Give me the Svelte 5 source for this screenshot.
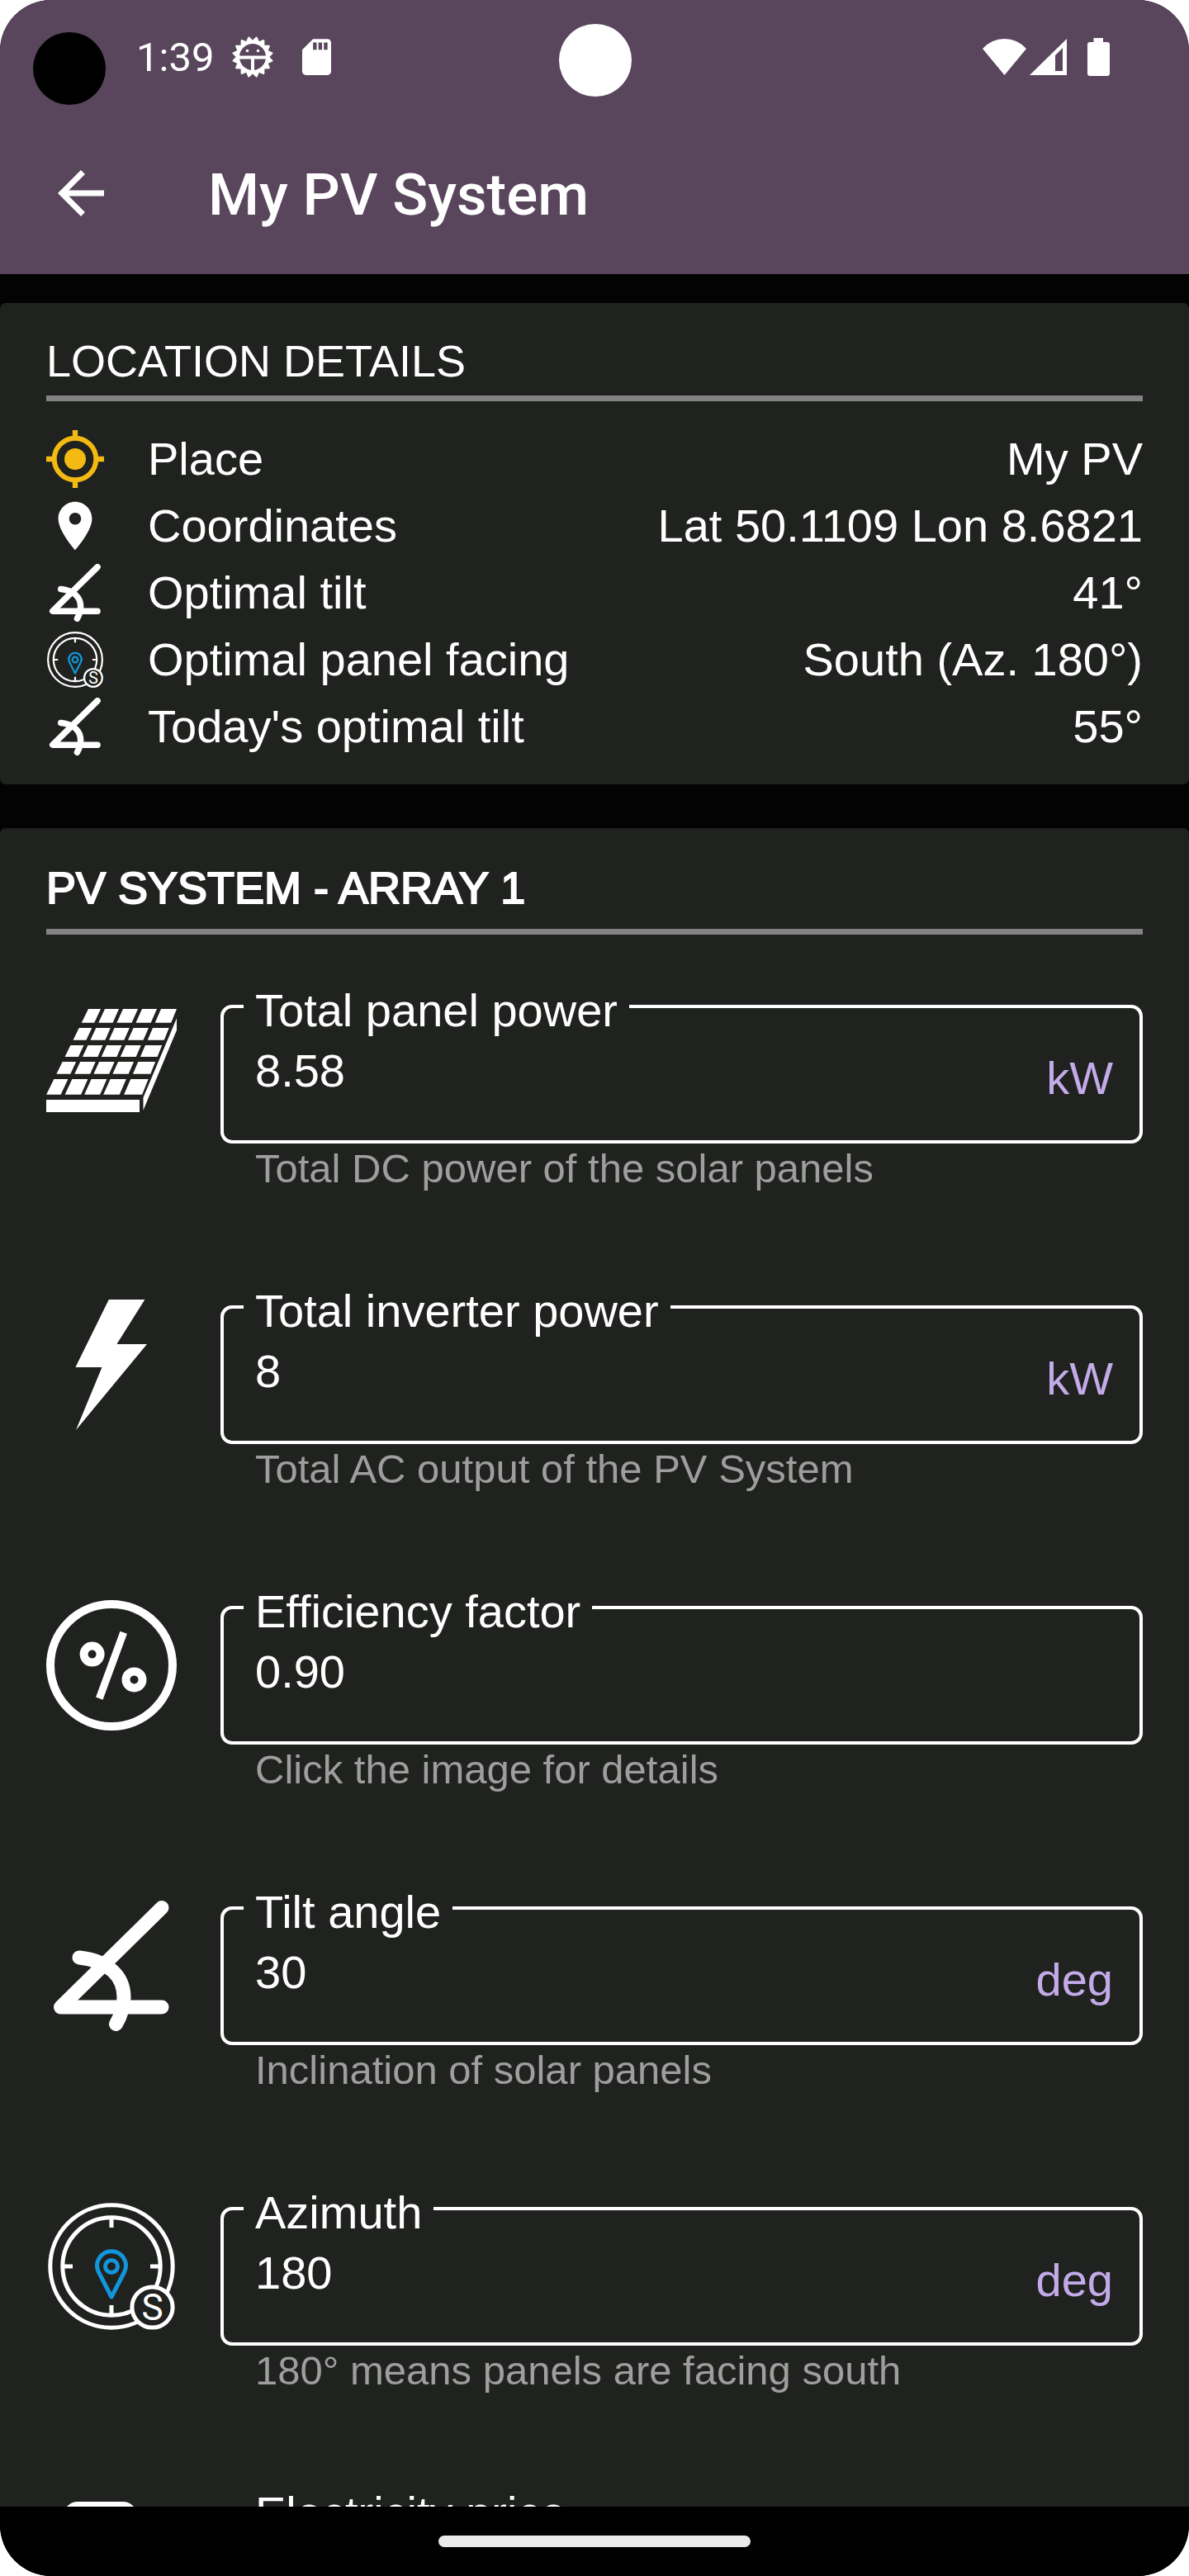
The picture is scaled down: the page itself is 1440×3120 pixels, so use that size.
<script>
	const details = [
		{ icon: 'target', label: 'Place', value: 'My PV' },
		{ icon: 'place', label: 'Coordinates', value: 'Lat 50.1109 Lon 8.6821' },
		{ icon: 'tilt', label: 'Optimal tilt', value: '41°' },
		{ icon: 'compass', label: 'Optimal panel facing', value: 'South (Az. 180°)' },
		{ icon: 'tilt', label: "Today's optimal tilt", value: '55°' }
	]

	let fields = $state([
		{ id: 'panel', icon: 'panel', label: 'Total panel power', value: '8.58', unit: 'kW', hint: 'Total DC power of the solar panels' },
		{ id: 'inverter', icon: 'bolt', label: 'Total inverter power', value: '8', unit: 'kW', hint: 'Total AC output of the PV System' },
		{ id: 'efficiency', icon: 'percent', label: 'Efficiency factor', value: '0.90', unit: '', hint: 'Click the image for details' },
		{ id: 'tilt', icon: 'tilt', label: 'Tilt angle', value: '30', unit: 'deg', hint: 'Inclination of solar panels' },
		{ id: 'azimuth', icon: 'compass', label: 'Azimuth', value: '180', unit: 'deg', hint: '180° means panels are facing south' },
		{ id: 'price', icon: 'meter', label: 'Electricity price', value: '', unit: '', hint: '' }
	])

	// solar panel cells: column edges at the top and bottom of the sheet
	const colsTop = [[51, 66], [71, 88], [93, 111], [116, 134], [139, 158]]
	const colsBottom = [[0, 17.5], [22.5, 42], [46, 65], [69, 88.6], [94, 116]]
	const rows = [[12, 28.7], [35, 49.7], [56, 70], [76, 90.7], [97, 115.7]]

	const edge = (a, b, y) => a + ((b - a) * (y - 12)) / 104

	const cells = rows.flatMap(([y1, y2]) =>
		colsTop.map(([l, r], i) => {
			const [bl, br] = colsBottom[i]
			return `${edge(l, bl, y1)},${y1} ${edge(r, br, y1)},${y1} ${edge(r, br, y2)},${y2} ${edge(l, bl, y2)},${y2}`
		})
	)

	const gear = Array.from({ length: 32 }, (_, i) => {
		const r = i % 2 ? 19 : 24
		const a = ((i + 1) * Math.PI) / 16
		return `${25 + r * Math.sin(a)},${25 - r * Math.cos(a)}`
	}).join(' ')
</script>

{#snippet icon(name)}
	{#if name === 'target'}
		<svg class="icon gold" viewBox="0 0 70 70" aria-hidden="true">
			<circle cx="35" cy="35" r="25.3" fill="none" stroke="currentColor" stroke-width="6" />
			<circle cx="35" cy="35" r="13" fill="currentColor" />
			<path d="M35 0v9M35 61v9M0 35h9M61 35h9" stroke="currentColor" stroke-width="6.4" />
		</svg>
	{:else if name === 'place'}
		<svg class="icon" viewBox="0 0 24 24" aria-hidden="true">
			<path fill="currentColor" d="M12 2C8.13 2 5 5.13 5 9c0 5.25 7 13 7 13s7-7.75 7-13c0-3.87-3.13-7-7-7zm0 9.5a2.5 2.5 0 0 1 0-5 2.5 2.5 0 0 1 0 5z" />
		</svg>
	{:else if name === 'tilt'}
		<svg class="icon" viewBox="0 0 158 158" fill="none" stroke="currentColor" stroke-width="17" stroke-linecap="round" stroke-linejoin="round" aria-hidden="true">
			<path d="M140 8.5 17.5 129H140" />
			<path d="M40 69C76 73 94 92 94 117C94 130 90 140 84.5 149.5" />
		</svg>
	{:else if name === 'compass'}
		<svg class="icon" viewBox="0 0 158 158" fill="none" stroke="currentColor" stroke-width="5" aria-hidden="true">
			<circle cx="79" cy="79" r="74.2" />
			<circle cx="79" cy="79" r="59.2" />
			<path d="M79 20v12M79 126v12M20 79h12M126 79h12" />
			<g stroke="#1296db" stroke-linejoin="round">
				<path d="M79 116 63.5 86A17.4 17.4 0 1 1 94.5 86Z" />
				<circle cx="79" cy="79" r="7.5" />
			</g>
			<circle cx="128.5" cy="128.5" r="24.6" fill="#20221f" />
			<text class="south" x="128.5" y="144" text-anchor="middle">S</text>
		</svg>
	{:else if name === 'panel'}
		<svg class="icon" viewBox="0 0 158 158" fill="currentColor" aria-hidden="true">
			{#each cells as points}
				<polygon {points} />
			{/each}
			<path d="M0 122h113v15H0zM158 23.3V37.7L117.5 134.7V119.3z" />
		</svg>
	{:else if name === 'bolt'}
		<svg class="icon" viewBox="0 0 158 158" fill="currentColor" aria-hidden="true">
			<path d="M75.8 0H119.4L85.4 54H122L36 158L67.5 82H35.4z" />
		</svg>
	{:else if name === 'percent'}
		<svg class="icon" viewBox="0 0 158 158" fill="none" stroke="currentColor" stroke-width="10" aria-hidden="true">
			<circle cx="79" cy="79" r="74" />
			<circle cx="55.6" cy="65.6" r="10" />
			<circle cx="106.5" cy="96.4" r="10" />
			<path d="M93.7 39.2 64.3 119.1" stroke-width="9" />
		</svg>
	{:else if name === 'meter'}
		<svg class="icon" viewBox="0 0 158 158" aria-hidden="true">
			<rect x="26" y="5" width="79" height="148" rx="12" fill="none" stroke="currentColor" stroke-width="10" />
		</svg>
	{/if}
{/snippet}

<div class="screen">
	<header>
		<div class="status">
			<time>1:39</time>
			<svg width="50" height="50" viewBox="0 0 50 50" aria-hidden="true">
				<polygon points={gear} fill="#fff" stroke="#fff" stroke-width="2" stroke-linejoin="round" />
				<circle cx="25" cy="25" r="16" fill="#59455c" />
				<path d="M9 25.5h32M25 25v17" stroke="#fff" stroke-width="4" />
				<circle cx="18.5" cy="17.5" r="1.8" fill="#fff" />
				<circle cx="31.5" cy="17.5" r="1.8" fill="#fff" />
			</svg>
			<svg class="sd" width="35" height="44" viewBox="4 2 16 20" aria-hidden="true">
				<path fill="#fff" d="M18 2h-8L4 8v12c0 1.1.9 2 2 2h12c1.1 0 2-.9 2-2V4c0-1.1-.9-2-2-2zm-6 6h-2V4h2v4zm3 0h-2V4h2v4zm3 0h-2V4h2v4z" />
			</svg>
			<div class="signals">
				<svg width="53" height="44" viewBox="0 0 53 44" aria-hidden="true">
					<path fill="#fff" d="M0 12Q11 0 26.5 0T53 12L26.5 44z" />
				</svg>
				<svg width="45" height="44" viewBox="0 0 45 44" aria-hidden="true">
					<path fill="#fff" fill-rule="evenodd" d="M45 0V44H0zM40 11l-9 9v19h9z" />
				</svg>
				<svg class="battery" width="27" height="46" viewBox="0 0 27 46" aria-hidden="true">
					<path fill="#fff" d="M7.5 0H19v5h5a3 3 0 0 1 3 3v35a3 3 0 0 1-3 3H3a3 3 0 0 1-3-3V8a3 3 0 0 1 3-3h4.5z" />
				</svg>
			</div>
			<span class="recorder"></span>
			<span class="camera"></span>
		</div>
		<div class="toolbar">
			<button class="back" aria-label="Back">
				<svg width="84" height="84" viewBox="0 0 24 24" aria-hidden="true">
					<path fill="#fff" d="M20 11H7.83l5.59-5.59L12 4l-8 8 8 8 1.41-1.41L7.83 13H20v-2z" />
				</svg>
			</button>
			<h1>My PV System</h1>
		</div>
	</header>

	<main>
		<section class="card">
			<h2>LOCATION DETAILS</h2>
			<dl>
				{#each details as d}
					<div class="detail">
						{@render icon(d.icon)}
						<dt>{d.label}</dt>
						<dd>{d.value}</dd>
					</div>
				{/each}
			</dl>
		</section>

		<section class="card">
			<h2 class="array">PV SYSTEM - ARRAY 1</h2>
			<form class="fields">
				{#each fields as f}
					<div class="field">
						<button type="button" class="picture" aria-label={f.label}>{@render icon(f.icon)}</button>
						<div class="control">
							<fieldset>
								<legend><label for={f.id}>{f.label}</label></legend>
								<div class="entry">
									<input id={f.id} type="text" inputmode="decimal" bind:value={f.value} />
									{#if f.unit}<span class="unit">{f.unit}</span>{/if}
								</div>
							</fieldset>
							<p>{f.hint}</p>
						</div>
					</div>
				{/each}
			</form>
		</section>
	</main>

	<nav><span class="handle"></span></nav>
</div>

<style>
	:global(body) {
		margin: 0;
		background: #fff;
	}

	.screen {
		display: flex;
		flex-direction: column;
		height: 100vh;
		overflow: hidden;
		border-radius: 62px;
		background: #030303;
		color: #fff;
		font-family: "Liberation Sans", Arial, sans-serif;
		font-size: 56px;
		line-height: 64px;
	}

	header {
		flex: none;
		background: #59455c;
		font-family: Roboto, sans-serif;
	}

	.status {
		position: relative;
		display: flex;
		align-items: center;
		height: 136px;
		padding: 2px 96px 0 165px;
		box-sizing: border-box;
	}

	.status time {
		margin-right: 22px;
		padding-top: 2px;
		font-size: 49px;
	}

	.sd {
		margin-left: 35px;
	}

	.signals {
		display: flex;
		align-items: center;
		gap: 4px;
		margin-left: auto;
	}

	.battery {
		margin-left: 21px;
	}

	.recorder,
	.camera {
		position: absolute;
		width: 88px;
		height: 88px;
		border-radius: 50%;
	}

	.recorder {
		top: 39px;
		left: 40px;
		background: #000;
	}

	.camera {
		top: 29px;
		left: calc(50% - 43px);
		background: #fff;
	}

	.toolbar {
		display: flex;
		align-items: center;
		gap: 112px;
		height: 196px;
		padding: 0 56px;
	}

	button {
		display: block;
		flex: none;
		padding: 0;
		border: 0;
		background: none;
		color: inherit;
	}

	svg {
		display: block;
		flex: none;
	}

	h1 {
		margin: 0;
		padding-top: 4px;
		font-size: 71px;
		font-weight: 500;
		line-height: 84px;
	}

	main {
		flex: 1;
		min-height: 0;
		padding-top: 35px;
		overflow-y: auto;
		scrollbar-width: none;
	}

	.card {
		margin-bottom: 53px;
		padding: 38px 56px 35px;
		border-radius: 7px;
		background: #20221f;
	}

	h2 {
		margin: 0 0 35px;
		padding-bottom: 10px;
		border-bottom: 7px solid #828282;
		font-size: 54px;
		font-weight: 400;
	}

	h2.array {
		margin-bottom: 50px;
		padding-bottom: 16px;
		line-height: 68px;
		-webkit-text-stroke: 2px #fff;
	}

	dl {
		display: flex;
		flex-direction: column;
		gap: 11px;
		margin: 0;
	}

	.detail {
		display: flex;
		align-items: center;
	}

	.detail .icon {
		width: 70px;
		height: 70px;
		margin-right: 53px;
	}

	.gold {
		color: #f2ba12;
	}

	.south {
		fill: #fff;
		stroke: none;
		font-family: Roboto, sans-serif;
		font-size: 44px;
		font-weight: 400;
	}

	dd {
		margin: 0 0 0 auto;
	}

	.fields {
		display: flex;
		flex-direction: column;
		gap: 103px;
	}

	.field {
		display: flex;
		gap: 53px;
	}

	.picture {
		width: 158px;
		height: 158px;
		margin-top: 28px;
	}

	.picture .icon {
		width: 100%;
		height: 100%;
	}

	.control {
		flex: 1;
		min-width: 0;
	}

	fieldset {
		min-width: 0;
		margin: 0;
		padding: 0 32px 0 38px;
		border: 4px solid #fff;
		border-radius: 14px;
	}

	legend {
		margin-left: -14px;
		padding: 10px 14px 0;
	}

	label {
		display: block;
	}

	.entry {
		display: flex;
	}

	input {
		flex: 1;
		min-width: 0;
		height: 125px;
		padding: 8px 0 53px;
		box-sizing: border-box;
		border: 0;
		outline: 0;
		background: none;
		color: inherit;
		font: inherit;
	}

	.unit {
		padding-top: 18px;
		color: #c3abe9;
	}

	p {
		min-height: 56px;
		margin: 2px 0 0 42px;
		color: #9e9e9e;
		font-size: 49px;
		line-height: 56px;
	}

	nav {
		display: flex;
		flex: none;
		align-items: center;
		justify-content: center;
		height: 84px;
		background: #000;
	}

	.handle {
		width: 378px;
		height: 14px;
		border-radius: 7px;
		background: #ebebeb;
	}
</style>
